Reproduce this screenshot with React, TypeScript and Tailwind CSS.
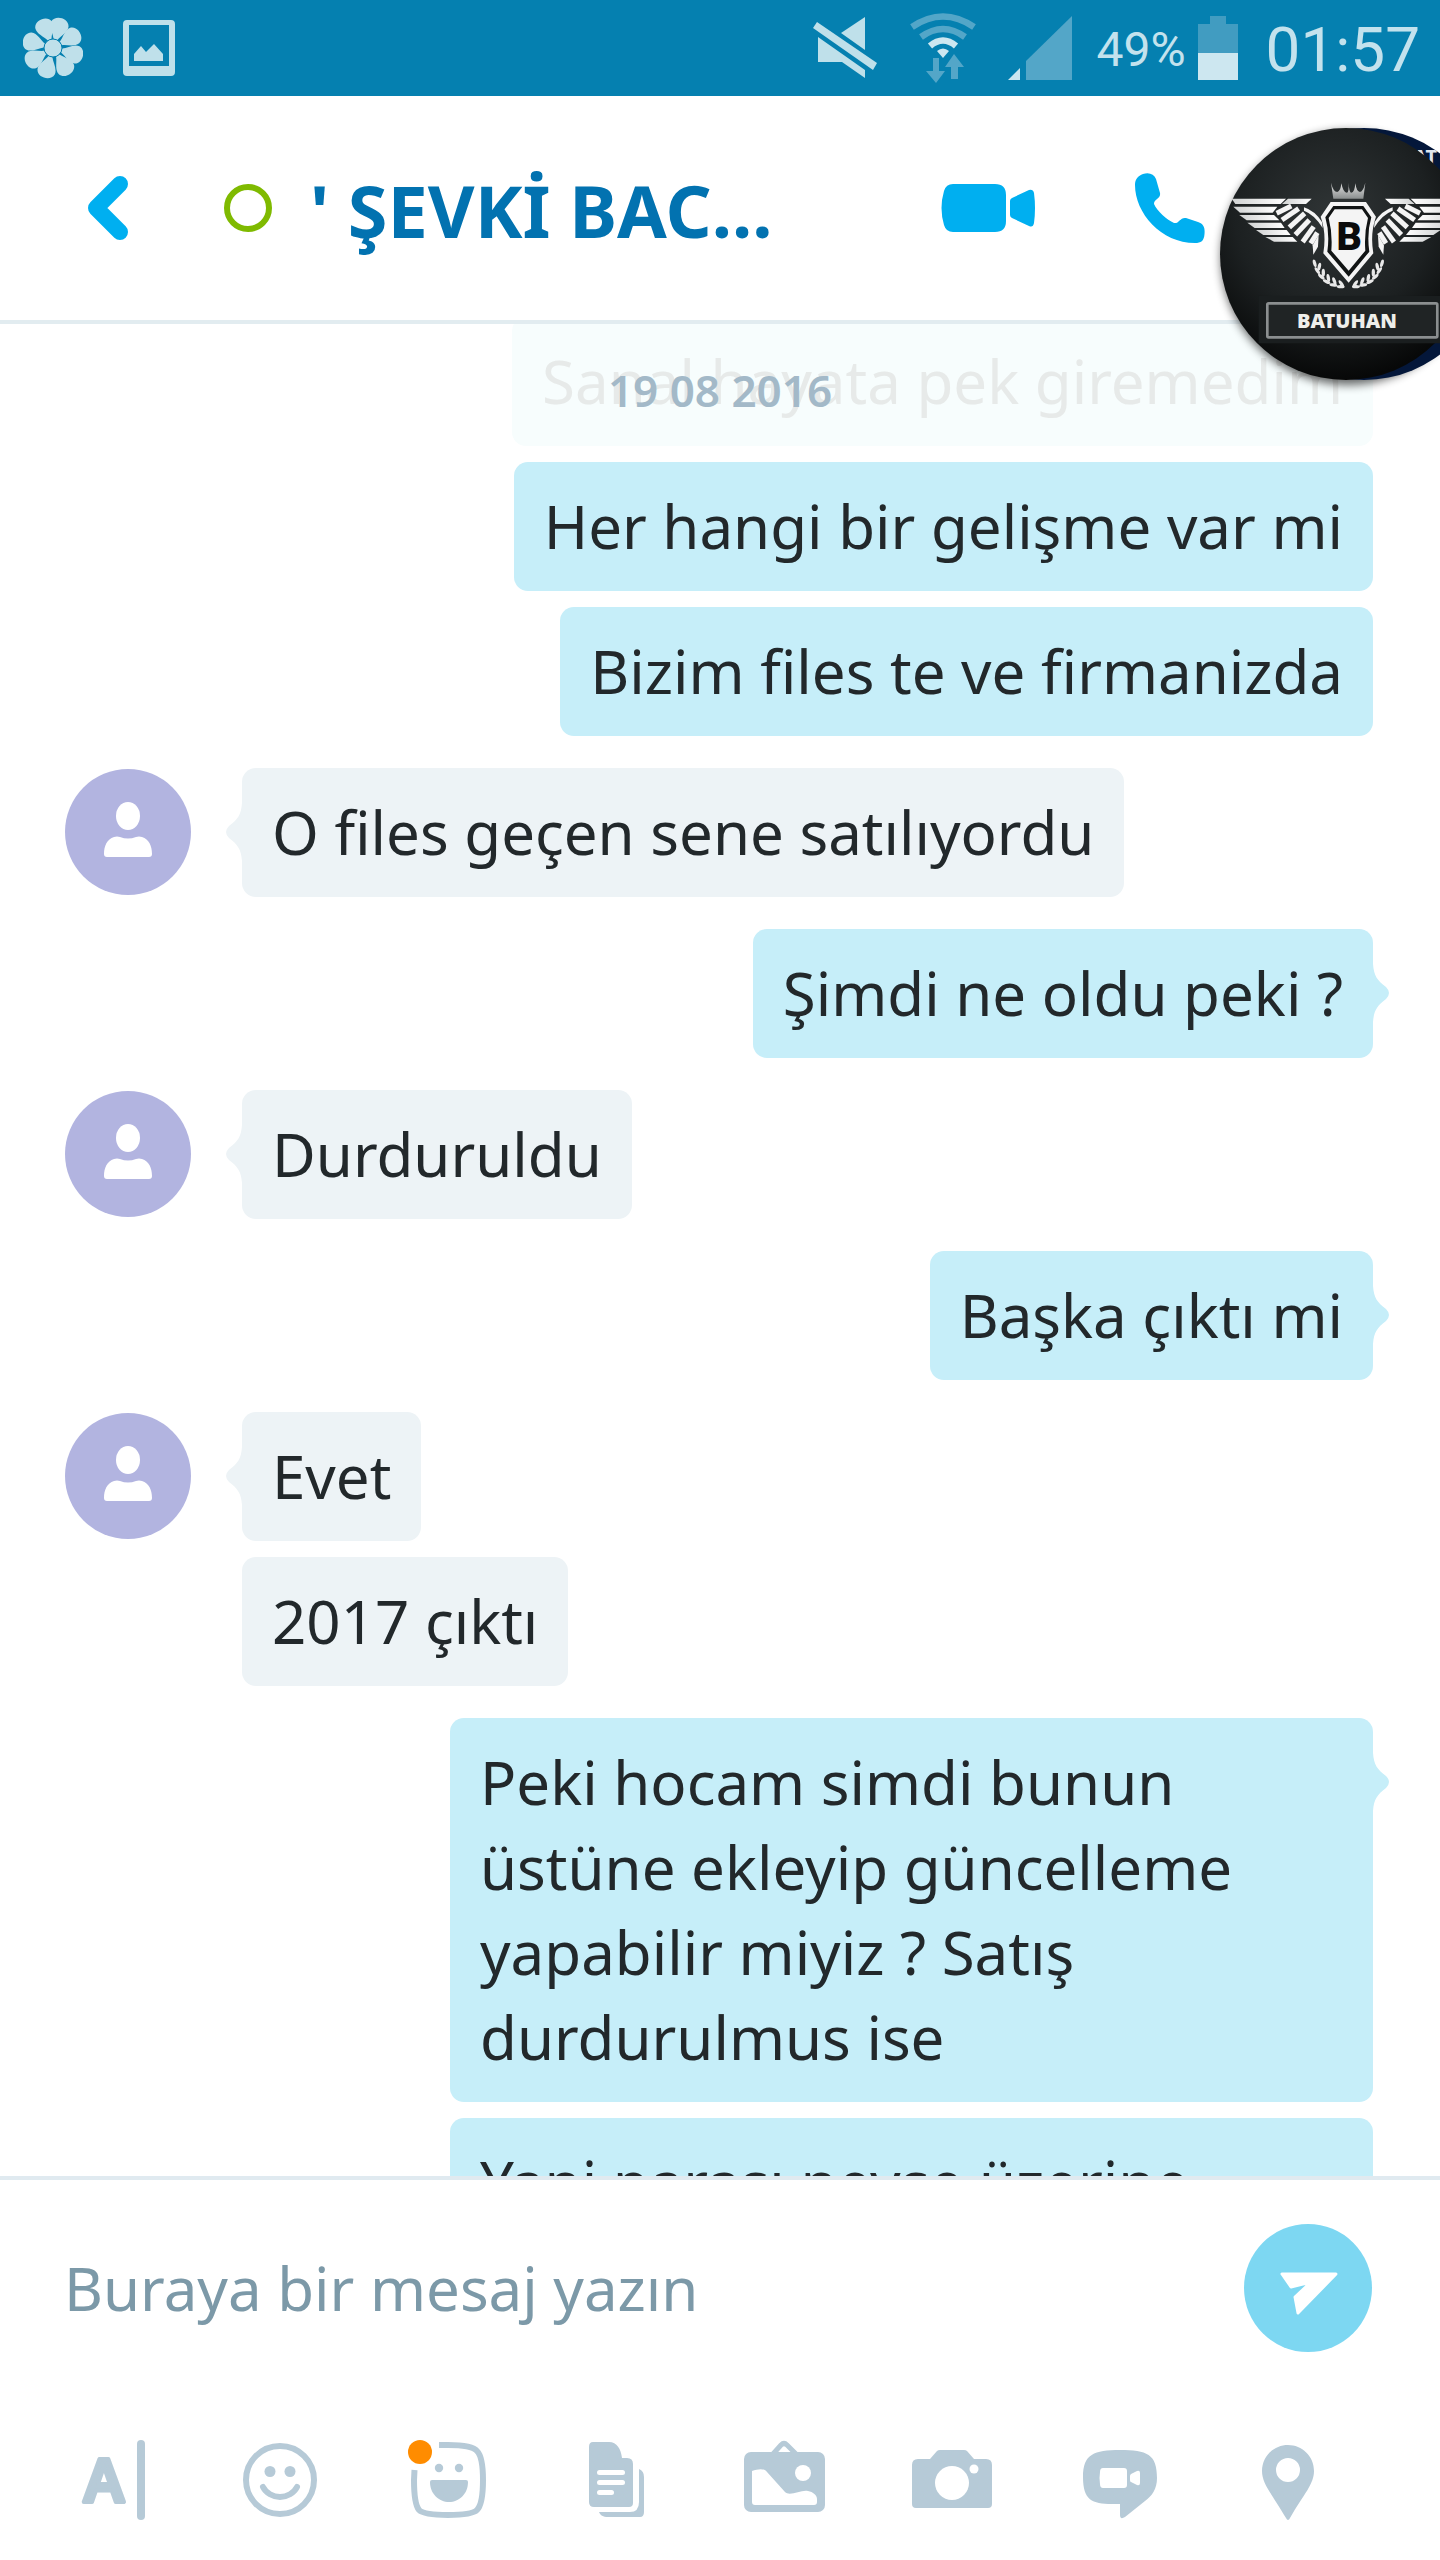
import { useState } from 'react';
import type { ReactNode } from 'react';

type Group = {
  from: 'me' | 'them';
  tail?: boolean;
  messages: { text: string; faded?: boolean }[];
};

const GROUPS: Group[] = [
  {
    from: 'me',
    messages: [
      { text: 'Sanal hayata pek giremedim', faded: true },
      { text: 'Her hangi bir gelişme var mi' },
      { text: 'Bizim files te ve firmanizda' },
    ],
  },
  { from: 'them', tail: true, messages: [{ text: 'O files geçen sene satılıyordu' }] },
  { from: 'me', tail: true, messages: [{ text: 'Şimdi ne oldu peki ?' }] },
  { from: 'them', tail: true, messages: [{ text: 'Durduruldu' }] },
  { from: 'me', tail: true, messages: [{ text: 'Başka çıktı mi' }] },
  { from: 'them', tail: true, messages: [{ text: 'Evet' }, { text: '2017 çıktı' }] },
  {
    from: 'me',
    tail: true,
    messages: [
      { text: 'Peki hocam simdi bunun üstüne ekleyip güncelleme yapabilir miyiz ? Satış durdurulmus ise' },
      { text: 'Yani parası neyse üzerine ekleyip alalim hocam' },
    ],
  },
];

// ---------------------------------------------------------------- status bar

function FlowerIcon() {
  return (
    <svg width="60" height="62" viewBox="-30 -31 60 62" fill="#bfe0ea" aria-hidden="true">
      {[16, 60, 106, 148, 196, 240, 286, 338].map((deg) => (
        <path key={deg} d="M-2 -9C-4 -14 -10 -19 -9 -25C-7 -33 7 -33 9 -25C10 -19 4 -14 2 -9Z" transform={`rotate(${deg})`} />
      ))}
      <circle r="9" stroke="#0580b0" strokeWidth="1" />
    </svg>
  );
}

function ScreenshotIcon() {
  return (
    <svg width="52" height="56" viewBox="0 0 52 56" aria-hidden="true">
      <path
        fill="#bfe0ea"
        fillRule="evenodd"
        d="M4 0H48Q52 0 52 4V52Q52 56 48 56H4Q0 56 0 52V4Q0 0 4 0ZM6 5V46H46V5Z"
      />
      <path fill="#bfe0ea" d="M11 41V34L18 26L23 32L31 24L40 34V41Z" />
    </svg>
  );
}

function MuteIcon() {
  return (
    <svg width="65" height="62" viewBox="0 0 65 62" fill="#bfe0ea" aria-hidden="true">
      <path d="M4 5L64 46L60 53L0 11Z" />
      <path d="M52 0V33L28 16Z" />
      <path d="M5 20L52 53V61L29 45H5Z" />
    </svg>
  );
}

function WifiIcon() {
  return (
    <svg width="66" height="70" viewBox="0 0 66 70" aria-hidden="true">
      <g fill="none" strokeWidth="6.500">
        <path d="M2 14Q33 -7 64 14" stroke="#53a6c8" />
        <path d="M11 24Q33 8 55 24" stroke="#53a6c8" />
        <path d="M20 33Q33 22 46 33" stroke="#cde7f0" />
      </g>
      <path d="M27 38Q33 33 39 38L33 45Z" fill="#cde7f0" />
      <path d="M23 45H29V58H35L26 70L16 58H23Z" fill="#53a6c8" />
      <path d="M41 66H48V54H54L44 41L35 54H41Z" fill="#53a6c8" />
    </svg>
  );
}

function SignalIcon() {
  return (
    <svg width="64" height="64" viewBox="0 0 64 64" aria-hidden="true">
      <path d="M64 0V64H18V45Z" fill="#53a6c8" />
      <path d="M12 52V64H0Z" fill="#cde7f0" />
    </svg>
  );
}

function BatteryIcon() {
  return (
    <svg width="40" height="64" viewBox="0 0 40 64" aria-hidden="true">
      <path d="M12 0H28V8H40V37H0V8H12Z" fill="#419cc1" />
      <path d="M0 37H40V64H0Z" fill="#cde7f0" />
    </svg>
  );
}

function StatusBar() {
  return (
    <div className="flex h-24 shrink-0 items-center justify-between bg-[#0580b0] pl-[23px] pr-5 font-['Roboto',sans-serif] text-[#c3e2ed]">
      <div className="flex items-center gap-10">
        <FlowerIcon />
        <ScreenshotIcon />
      </div>
      <div className="flex items-center">
        <div className="flex items-center gap-8">
          <MuteIcon />
          <WifiIcon />
          <SignalIcon />
        </div>
        <span className="ml-6 mr-3 pt-1 text-[48px] leading-[88px]">49%</span>
        <BatteryIcon />
        <time className="ml-7 pt-1 text-[62px] leading-[88px]">01:57</time>
      </div>
    </div>
  );
}

// -------------------------------------------------------------------- header

const LEAVES = [
  [404, 490, -15],
  [418, 500, 12],
  [412, 512, -35],
  [430, 518, 0],
  [424, 530, -50],
  [445, 534, -10],
  [440, 545, -65],
  [463, 543, -20],
  [460, 555, -80],
  [484, 551, -35],
  [482, 560, -88],
];

function Wing() {
  return (
    <g>
      <g fill="url(#silver)">
        <path d="M155 296H318L302 312H166Z" />
        <path d="M324 296H395L378 312H306Z" />
        <path d="M160 320H292L278 338H180Z" />
        <path d="M178 345H282L298 361H200Z" />
        <path d="M202 368H303L314 384H224Z" />
        <path d="M228 390H320L332 405H250Z" />
        <path d="M256 411H338L352 425H282Z" />
      </g>
      <g stroke="#f4f4f4" strokeWidth="15">
        <path d="M334 318L290 340" />
        <path d="M356 326L306 360" />
        <path d="M374 340L328 382" />
        <path d="M388 360L346 404" />
        <path d="M401 380L368 426" />
        <path d="M412 398L392 430" />
      </g>
      <path d="M372 322Q404 332 426 366L428 384Q404 344 372 332Z" fill="#f4f4f4" />
      <path d="M398 436L416 404L414 440L400 464Z" fill="#f4f4f4" />
    </g>
  );
}

function ChatHead() {
  return (
    <button type="button" aria-label="BATUHAN" className="absolute right-0 top-4 z-10">
      <svg width="230" height="288" viewBox="0 0 230 288">
        <defs>
          <radialGradient id="leather" cx="45%" cy="35%" r="65%">
            <stop offset="0" stopColor="#303536" />
            <stop offset="0.600" stopColor="#1c2021" />
            <stop offset="1" stopColor="#070808" />
          </radialGradient>
          <linearGradient id="silver" x1="0" y1="0" x2="1" y2="0">
            <stop offset="0" stopColor="#d0d2d2" />
            <stop offset="1" stopColor="#ffffff" />
          </linearGradient>
          <linearGradient id="crown" x1="0" y1="0" x2="0" y2="1">
            <stop offset="0" stopColor="#e4e4e4" />
            <stop offset="1" stopColor="#8b8f8f" />
          </linearGradient>
          <clipPath id="head">
            <circle cx="154" cy="142" r="126" />
          </clipPath>
          <filter id="shadow" x="-20%" y="-20%" width="140%" height="140%">
            <feGaussianBlur stdDeviation="5" />
          </filter>
        </defs>
        <circle cx="138" cy="146" r="127" fill="#000" opacity="0.600" filter="url(#shadow)" />
        <circle cx="154" cy="142" r="126" fill="#04173a" />
        <g clipPath="url(#head)">
          <text x="203" y="52" fill="#dfe5ee" fontSize="20" fontWeight="700" fontFamily="Noto Sans, sans-serif">
            AT
          </text>
        </g>
        <circle cx="136" cy="142" r="126" fill="url(#leather)" />
        <g transform="translate(-30 -12) scale(0.3333)">
          <Wing />
          <g transform="translate(1010 0) scale(-1 1)">
            <Wing />
          </g>
          <path
            d="M453 248Q460 276 472 276Q482 274 484 250Q490 278 500 278Q508 278 505 248Q508 278 514 278Q524 278 526 250Q530 276 540 276Q550 274 556 248L550 296H460Z"
            fill="url(#crown)"
          />
          <path d="M452 306H558L588 350Q570 400 580 460L506 548L430 460Q440 400 422 350Z" fill="#f4f4f4" />
          <path d="M460 318H550L574 352Q560 400 568 455L506 530L442 455Q450 400 436 352Z" fill="#111414" />
          <path d="M464 328H546L564 354Q552 400 556 452L506 512L454 452Q458 400 446 354Z" fill="#f4f4f4" />
          <text
            x="508"
            y="450"
            textAnchor="middle"
            fill="#0b0b0b"
            fontSize="118"
            fontWeight="900"
            fontFamily="Roboto, sans-serif"
          >
            B
          </text>
          <g fill="#e8e8e8">
            {LEAVES.map(([x, y, deg]) => (
              <g key={`${x}-${y}`}>
                <ellipse cx={x} cy={y} rx="5" ry="12" transform={`rotate(${deg} ${x} ${y})`} />
                <ellipse cx={1010 - x} cy={y} rx="5" ry="12" transform={`rotate(${-deg} ${1010 - x} ${y})`} />
              </g>
            ))}
          </g>
          <rect x="236" y="588" width="560" height="142" fill="#1a1e1f" />
          <rect x="262" y="610" width="510" height="102" rx="4" fill="#202425" stroke="#8b8f90" strokeWidth="8" />
          <text
            x="501"
            y="684"
            textAnchor="middle"
            fill="#eeeeea"
            fontSize="60"
            fontWeight="900"
            fontFamily="Noto Sans, sans-serif"
          >
            BATUHAN
          </text>
        </g>
      </svg>
    </button>
  );
}

function Header() {
  return (
    <header className="relative flex h-[228px] shrink-0 items-center border-b-4 border-[#e2ecf0] bg-white pl-[88px] pr-[235px]">
      <button type="button" aria-label="Geri" className="mr-[95px]">
        <svg width="41" height="64" viewBox="0 0 41 64" fill="none" aria-hidden="true">
          <path d="M32 8L8 32L32 56" stroke="#00aff0" strokeWidth="16" strokeLinecap="round" strokeLinejoin="round" />
        </svg>
      </button>
      <span className="mr-[38px] size-12 shrink-0 rounded-full border-[6px] border-[#7fba00]" />
      <h1 className="min-w-0 flex-1 whitespace-nowrap pt-1 text-[72px] font-bold leading-[96px] text-[#0272b0]">
        ' ŞEVKİ BAC...
      </h1>
      <div className="flex items-center gap-[100px] text-[#00aff0]">
        <button type="button" aria-label="Görüntülü arama">
          <svg width="94" height="48" viewBox="0 0 94 48" fill="currentColor" aria-hidden="true">
            <path d="M12 0H54Q65 0 65 11V37Q65 48 54 48H12Q5 48 3 41Q-2 24 3 7Q5 0 12 0Z" />
            <path d="M71 14L88 6Q92 5 93 9Q95 24 93 39Q92 44 88 42L71 34Q69 33 69 31V17Q69 15 71 14Z" />
          </svg>
        </button>
        <button type="button" aria-label="Sesli arama">
          <svg width="70" height="70" viewBox="0 0 70 70" fill="currentColor" aria-hidden="true">
            <path d="M8 1C14 -1 19 1 21 6L25 20C26 26 19 26 19 31C22 38 32 47 39 50C44 51 45 44 51 45L63 49C69 51 70 55 69.500 61C69 68 66 70 60 70C26 70 0 40 0 12C0 6 3 3 8 1Z" />
          </svg>
        </button>
      </div>
      <ChatHead />
    </header>
  );
}

// ------------------------------------------------------------------ messages

function Avatar() {
  return (
    <svg width="126" height="126" viewBox="0 0 126 126" className="mt-px shrink-0" aria-hidden="true">
      <circle cx="63" cy="63" r="63" fill="#b2b4e0" />
      <g fill="#fff">
        <ellipse cx="63" cy="47" rx="12" ry="14" />
        <path d="M49 68Q52 67 55 68Q63 71 71 68Q74 67 77 68C84 70 87 77 87 85Q87 88 84 88H42Q39 88 39 85C39 77 42 70 49 68Z" />
      </g>
    </svg>
  );
}

function Tail({ side }: { side: 'left' | 'right' }) {
  return (
    <svg
      width="18"
      height="58"
      viewBox="0 0 18 58"
      className={
        side === 'left'
          ? 'absolute -left-[17px] top-[35px] text-[#edf3f6]'
          : 'absolute -right-[17px] top-[35px] rotate-180 text-[#c6eef9]'
      }
      aria-hidden="true"
    >
      <path d="M18 0H17C16 12 13 16 4 23Q-2 29 4 35C13 42 16 46 17 58H18Z" fill="currentColor" />
    </svg>
  );
}

function Bubble({ text, faded, mine, tail }: { text: string; faded?: boolean; mine: boolean; tail: boolean }) {
  let tone = mine ? 'bg-[#c6eef9] text-[#22282b]' : 'bg-[#edf3f6] text-[#22282b]';
  if (faded) tone = 'bg-[#f7fdfd] text-[#e7eae9]';

  return (
    <p className={`relative max-w-[923px] rounded-[14px] px-[30px] py-[22px] text-[60px] leading-[85px] ${tone}`}>
      {tail && <Tail side={mine ? 'right' : 'left'} />}
      {text}
    </p>
  );
}

function MessageGroup({ group }: { group: Group }) {
  const mine = group.from === 'me';
  return (
    <li className={mine ? 'flex justify-end' : 'flex gap-[51px]'}>
      {!mine && <Avatar />}
      <div className={`flex flex-col gap-4 ${mine ? 'items-end' : 'items-start'}`}>
        {group.messages.map((m, i) => (
          <Bubble key={m.text} text={m.text} faded={m.faded} mine={mine} tail={!!group.tail && i === 0} />
        ))}
      </div>
    </li>
  );
}

function Conversation() {
  return (
    <main className="relative min-h-0 flex-1 overflow-hidden">
      {/* list is scrolled a little, so the first bubble starts above the edge */}
      <ul className="-mt-[7px] flex flex-col gap-8 pl-[65px] pr-[67px]">
        {GROUPS.map((g, i) => (
          <MessageGroup key={i} group={g} />
        ))}
      </ul>
      <time className="absolute inset-x-0 top-9 text-center text-[44px] font-semibold leading-[60px] text-[#a3b9c8]">
        19 08 2016
      </time>
    </main>
  );
}

// ------------------------------------------------------------------ composer

const TOOLS: { label: string; icon: ReactNode }[] = [
  {
    label: 'Metin',
    icon: (
      <>
        <text
          x="40"
          y="70"
          textAnchor="middle"
          fontSize="60"
          fontWeight="600"
          fontFamily="Noto Sans, sans-serif"
          stroke="currentColor"
          strokeWidth="4"
          strokeLinejoin="round"
        >
          A
        </text>
        <rect x="73" y="8" width="8" height="80" rx="4" />
      </>
    ),
  },
  {
    label: 'İfade',
    icon: (
      <>
        <g fill="none" stroke="currentColor" strokeWidth="6">
          <circle cx="48" cy="48" r="34" />
          <path d="M31 55C34 61 41 65 48 65S62 61 65 55" strokeLinecap="round" />
        </g>
        <circle cx="38" cy="39.500" r="5.500" />
        <circle cx="58" cy="39.500" r="5.500" />
      </>
    ),
  },
  {
    label: 'Çıkartma',
    icon: (
      <>
        <path
          d="M39 13H48C62 13 73 14 77 19C82 24 83 38 83 48C83 62 82 73 77 78C73 82 62 83 48 83C35 83 23 82 19 78C15 73 14 62 14 48L14.500 38"
          fill="none"
          stroke="currentColor"
          strokeWidth="6"
        />
        <circle cx="39" cy="36" r="4.200" />
        <circle cx="59" cy="36" r="4.200" />
        <path d="M30 50Q30 48 32 48H66Q68 48 68 50C68 62 59 70 49 70S30 62 30 50Z" />
        <circle cx="20" cy="20" r="12" fill="#ff8c00" />
      </>
    ),
  },
  {
    label: 'Dosya',
    icon: (
      <>
        <path d="M25 10H41C49 10 53 17 54 26H59Q65 26 65 32V71Q65 75 61 75H26Q21 75 21 70V15Q21 10 25 10Z" />
        <path d="M71 37Q76 39 76 45V80Q76 85 72 85H40C35 85 32 83 31 80H62Q71 80 71 70Z" />
        <g fill="#fff">
          <rect x="29" y="38" width="28" height="5" rx="2.500" />
          <rect x="29" y="48" width="28" height="5" rx="2.500" />
          <rect x="29" y="58" width="17" height="5" rx="2.500" />
        </g>
      </>
    ),
  },
  {
    label: 'Resim',
    icon: (
      <>
        <path d="M37 22L45 13Q48 10 51 13L60 22" fill="none" stroke="currentColor" strokeWidth="5" />
        <rect x="8" y="20" width="81" height="60" rx="7" />
        <g fill="#fff">
          <path d="M16 39C22 37 28 36 31 40L49 60C54 65 66 57 72 59C77 60 81 63 81 67V70Q81 73 78 73H19Q16 73 16 70Z" />
          <circle cx="67" cy="41" r="8" />
        </g>
      </>
    ),
  },
  {
    label: 'Kamera',
    icon: (
      <>
        <path d="M26 27L33 19Q34 18 36 18H60Q62 18 63 19L70 27H82Q88 27 88 33V72Q88 76 84 76H12Q8 76 8 72V33Q8 27 14 27Z" />
        <g fill="#fff">
          <circle cx="48" cy="51" r="17" />
          <circle cx="70" cy="37" r="4.500" />
        </g>
      </>
    ),
  },
  {
    label: 'Video mesajı',
    icon: (
      <>
        <path d="M48 18C75 18 85 22 85 46C85 57 80 64 73 69L53 85Q48 88 48 83V72H40C20 72 11 68 11 45C11 22 22 18 48 18Z" />
        <g fill="#fff">
          <path d="M31 36H52Q55 36 55 39V53Q55 56 52 56H31Q28 56 28 52Q27 46 28 40Q28 36 31 36Z" />
          <path d="M59 42L65 39Q68 38 68 41V51Q68 54 65 53L59 50Q58 50 58 48V44Q58 43 59 42Z" />
        </g>
      </>
    ),
  },
  {
    label: 'Konum',
    icon: (
      <path
        fillRule="evenodd"
        d="M48 13C62 13 74 24 74 39C74 52 64 62 50 86Q48 90 46 86C32 62 22 52 22 39C22 24 34 13 48 13ZM48 26A12 12 0 1 0 48 50A12 12 0 1 0 48 26Z"
      />
    ),
  },
];

function Composer() {
  const [draft, setDraft] = useState('');

  return (
    <footer className="shrink-0 border-t-4 border-[#e0eaf0] bg-white pb-8 pt-11">
      <form className="flex items-center pl-16 pr-[68px]" onSubmit={(e) => e.preventDefault()}>
        <input
          type="text"
          aria-label="Buraya bir mesaj yazın"
          placeholder="Buraya bir mesaj yazın"
          value={draft}
          onChange={(e) => setDraft(e.target.value)}
          className="min-w-0 flex-1 bg-transparent text-[60px] leading-[86px] text-[#22282b] outline-none placeholder:text-[#7c99a8]"
        />
        <button type="submit" aria-label="Gönder" className="size-32 shrink-0 rounded-full bg-[#7dd7f2]">
          <svg width="128" height="128" viewBox="0 0 128 128" aria-hidden="true">
            <path
              d="M38 50H92L54 89L51 73L65 60Q62 59 59 60L47 63Z"
              fill="#fff"
              stroke="#fff"
              strokeWidth="3"
              strokeLinejoin="round"
            />
          </svg>
        </button>
      </form>
      <div className="mt-20 flex pl-7 pr-[68px] text-[#b6cad7]">
        {TOOLS.map((tool) => (
          <button key={tool.label} type="button" aria-label={tool.label} className="flex flex-1 justify-center">
            <svg width="96" height="96" viewBox="0 0 96 96" fill="currentColor" aria-hidden="true">
              {tool.icon}
            </svg>
          </button>
        ))}
      </div>
    </footer>
  );
}

export default function App() {
  return (
    <div className="flex h-screen flex-col overflow-hidden bg-white font-['Noto_Sans','Open_Sans',sans-serif]">
      <StatusBar />
      <Header />
      <Conversation />
      <Composer />
    </div>
  );
}
